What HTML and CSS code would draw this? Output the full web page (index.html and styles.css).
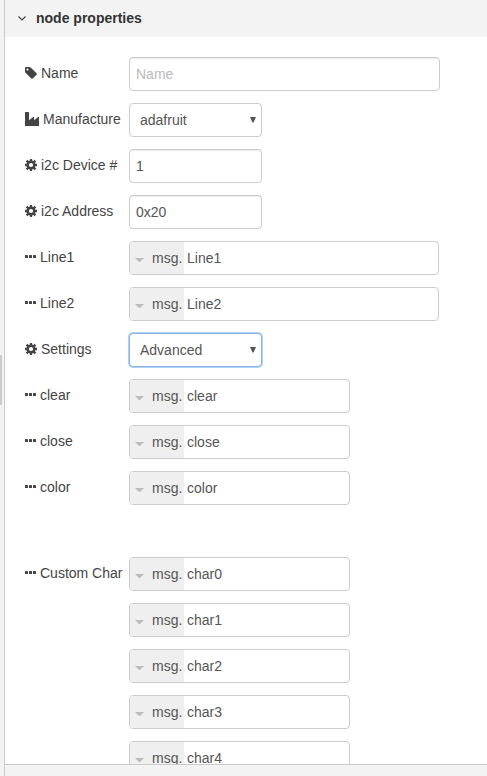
FILE: index.html
```html
<!DOCTYPE html>
<html lang="en">
<head>
<meta charset="utf-8">
<title>node properties</title>
<link rel="stylesheet" href="styles.css">
</head>
<body>
<svg class="defs" width="0" height="0">
  <symbol id="tag" viewBox="128 128 1536 1536"><path d="M576 448q0-53-37.5-90.5t-90.5-37.5-90.5 37.5-37.5 90.5 37.5 90.5 90.5 37.5 90.5-37.5 37.5-90.5zm1067 576q0 53-37 90l-491 492q-39 37-91 37-53 0-90-37l-715-716q-38-37-64.5-101t-26.5-117v-416q0-52 38-90t90-38h416q53 0 117 26.5t102 64.5l715 714q37 39 37 91z"/></symbol>
  <symbol id="cog" viewBox="0 0 12 12"><circle cx="6" cy="6" r="3.300" fill="none" stroke="currentColor" stroke-width="2.400"/><path stroke="currentColor" stroke-width="2.300" d="M6 0V2.500M6 9.500V12M0 6H2.500M9.500 6H12M1.600 1.600L3.400 3.400M8.600 8.600L10.400 10.400M1.600 10.400L3.400 8.600M8.600 3.400L10.400 1.600"/></symbol>
  <symbol id="industry" viewBox="0 0 14 14"><path d="M.5 0H3.500Q4 0 4 .5V8.200L8.200 4.900Q9 4.500 9 5.300V8.200L13.200 4.900Q14 4.500 14 5.300V13.500Q14 14 13.500 14H.5Q0 14 0 13.500V.5Q0 0 .5 0Z"/></symbol>
  <symbol id="dots" viewBox="0 0 11 3"><rect width="3" height="3" rx=".6"/><rect x="4" width="3" height="3" rx=".6"/><rect x="8" width="3" height="3" rx=".6"/></symbol>
  <symbol id="caret" viewBox="0 0 9 4"><path d="M0 0H9L5 4H4Z"/></symbol>
  <symbol id="arrow" viewBox="0 0 6 6"><path d="M0 0H6L3.500 5.500H2.500Z"/></symbol>
</svg>
<div class="tray">
  <div class="resize"><div class="handle"></div></div>
  <div class="panel">
    <div class="header"><svg class="chevron" viewBox="0 0 8 5"><path d="M.5 .5L4 4L7.500 .5"/></svg><span>node properties</span></div>
    <div class="form">
      <div class="row"><div class="label"><svg class="i12"><use href="#tag"/></svg>Name</div><div class="field inset wide placeholder">Name</div></div>
      <div class="row"><div class="label"><svg class="i14"><use href="#industry"/></svg>Manufacture</div><div class="field select">adafruit<svg class="arrow"><use href="#arrow"/></svg></div></div>
      <div class="row"><div class="label"><svg class="i12"><use href="#cog"/></svg>i2c Device #</div><div class="field inset short">1</div></div>
      <div class="row"><div class="label"><svg class="i12"><use href="#cog"/></svg>i2c Address</div><div class="field inset short">0x20</div></div>
      <div class="row"><div class="label"><svg class="dots"><use href="#dots"/></svg>Line1</div><div class="field typed long"><span class="type"><svg class="caret"><use href="#caret"/></svg>msg.</span>Line1</div></div>
      <div class="row"><div class="label"><svg class="dots"><use href="#dots"/></svg>Line2</div><div class="field typed long"><span class="type"><svg class="caret"><use href="#caret"/></svg>msg.</span>Line2</div></div>
      <div class="row"><div class="label"><svg class="i12"><use href="#cog"/></svg>Settings</div><div class="field select focus">Advanced<svg class="arrow"><use href="#arrow"/></svg></div></div>
      <div class="row"><div class="label"><svg class="dots"><use href="#dots"/></svg>clear</div><div class="field typed"><span class="type"><svg class="caret"><use href="#caret"/></svg>msg.</span>clear</div></div>
      <div class="row"><div class="label"><svg class="dots"><use href="#dots"/></svg>close</div><div class="field typed"><span class="type"><svg class="caret"><use href="#caret"/></svg>msg.</span>close</div></div>
      <div class="row"><div class="label"><svg class="dots"><use href="#dots"/></svg>color</div><div class="field typed"><span class="type"><svg class="caret"><use href="#caret"/></svg>msg.</span>color</div></div>
      <div class="row group"><div class="label"><svg class="dots"><use href="#dots"/></svg>Custom Char</div><div class="field typed"><span class="type"><svg class="caret"><use href="#caret"/></svg>msg.</span>char0</div></div>
      <div class="row"><div class="label"></div><div class="field typed"><span class="type"><svg class="caret"><use href="#caret"/></svg>msg.</span>char1</div></div>
      <div class="row"><div class="label"></div><div class="field typed"><span class="type"><svg class="caret"><use href="#caret"/></svg>msg.</span>char2</div></div>
      <div class="row"><div class="label"></div><div class="field typed"><span class="type"><svg class="caret"><use href="#caret"/></svg>msg.</span>char3</div></div>
      <div class="row"><div class="label"></div><div class="field typed"><span class="type"><svg class="caret"><use href="#caret"/></svg>msg.</span>char4</div></div>
    </div>
    <div class="footer"></div>
  </div>
</div>
</body>
</html>
```
FILE: styles.css
```css
* { box-sizing: border-box; }
body {
  margin: 0;
  overflow: hidden;
  font: 14px/20px "Liberation Sans", Arial, sans-serif;
  color: #444;
  background: #fff;
}
svg { display: block; flex: none; fill: currentColor; }
.defs { display: none; }
.tray { display: flex; height: 776px; }
.resize {
  display: flex;
  align-items: flex-start;
  width: 5px;
  flex: none;
  background: #f3f3f3;
  border-right: 1px solid #ccc;
}
.handle { width: 2px; height: 50px; margin-top: 355px; background: #ccc; }
.panel { display: flex; flex-direction: column; flex: 1; min-width: 0; }
.header {
  display: flex;
  align-items: center;
  flex: none;
  height: 37px;
  padding-left: 13px;
  gap: 10px;
  background: #f3f3f3;
  color: #333;
  font-weight: bold;
}
.header span { margin-bottom: 1px; }
.chevron { width: 8px; height: 5px; fill: none; stroke: #444; stroke-width: 1.2; }
.form {
  display: flex;
  flex-direction: column;
  flex: 1;
  min-height: 0;
  overflow: hidden;
  gap: 12px;
  padding: 20px 0 0 20px;
}
.row { display: flex; flex: none; height: 34px; }
.group { margin-top: 40px; }
.label {
  display: flex;
  align-items: center;
  width: 104px;
  height: 32px;
  flex: none;
  gap: 4px;
  white-space: nowrap;
}
.i12 { width: 12px; height: 12px; }
.i14 { width: 14px; height: 14px; }
.dots { width: 11px; height: 3px; margin-bottom: 1px; }
.field {
  display: flex;
  align-items: center;
  width: 221px;
  height: 34px;
  padding: 0 6px;
  border: 1px solid #ccc;
  border-radius: 4px;
  background: #fff;
  color: #555;
}
.inset { box-shadow: inset 0 1px 1px rgba(0, 0, 0, .075); }
.wide { width: 311px; }
.long { width: 310px; }
.short { width: 133px; }
.placeholder { color: #bbb; }
.select { width: 133px; justify-content: space-between; padding: 0 5px 0 10px; }
.arrow { width: 6px; height: 6px; }
.focus { border-color: #8cb4e4; box-shadow: 0 0 0 1px #b0d0f5; }
.typed { padding: 0; gap: 3px; overflow: hidden; }
.type {
  display: flex;
  align-items: center;
  width: 54px;
  height: 100%;
  padding-left: 5px;
  gap: 8px;
  background: #efefef;
}
.caret { width: 9px; height: 4px; margin-top: 4px; color: #bbb; }
.footer { flex: none; height: 12px; background: #f3f3f3; border-top: 1px solid #ccc; }
```
